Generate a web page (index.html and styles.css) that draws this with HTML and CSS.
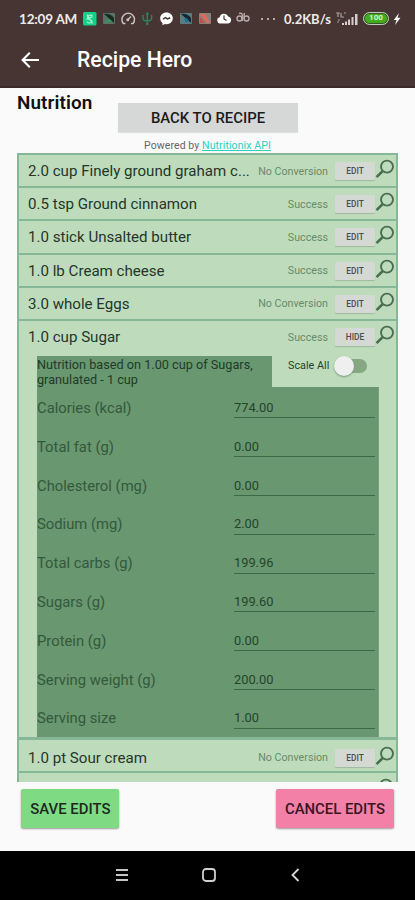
FILE: index.html
```html
<!DOCTYPE html>
<html lang="en">
<head>
<meta charset="utf-8">
<title>Recipe Hero</title>
<link rel="stylesheet" href="styles.css">
</head>
<body>
<svg width="0" height="0" class="defs">
  <symbol id="mag" viewBox="0 0 20 20"><circle cx="12" cy="7.600" r="6" fill="none" stroke="currentColor" stroke-width="1.900"/><path d="M7.800 12 1.500 18.200" stroke="currentColor" stroke-width="2.500" fill="none"/></symbol>
</svg>
<header class="top">
  <div class="status">
    <span class="clock">12:09 AM</span>
    <svg class="tray" width="176" height="16" viewBox="82 11 176 16">
      <rect x="83" y="12" width="13.500" height="13.500" rx="1.500" fill="#14cf86"/>
      <path d="M92.500 16c-2-2-5-.5-5 1.500 0 3 4.500 1.500 4.500 4 0 2-4 2-5 .2M87 14.500l5.500 9M86.500 19.500l6-3" fill="none" stroke="#a9f3d4" stroke-width="1.200"/>
      <rect x="103" y="13" width="12" height="11" rx="1" fill="#5c7065"/><path d="M104 14l10 9v-5q-4-5-10-4z" fill="#172d24"/><path d="M104 23l5-4 3 2z" fill="#2f9c62"/>
      <path d="M123.300 23.500a6.300 6.300 0 1 1 9.800 0M123 23.500h2.500M131 23.500h2.500M127.500 20l3.500-3.500" fill="none" stroke="#c9c0bd" stroke-width="1.500"/><circle cx="127.800" cy="19.800" r="1.500" fill="#c9c0bd"/>
      <path d="M147.300 13v11.500M143 15v3q0 3 4.300 3t4.300-3v-3" fill="none" stroke="#25845a" stroke-width="1.500"/><path d="M145.500 14.500l1.800-2.800 1.800 2.800z" fill="#25845a"/><circle cx="147.300" cy="24" r="1.300" fill="#25845a"/>
      <path d="M166.500 12.500c-3.600 0-6.300 2.500-6.300 5.800 0 2 .9 3.500 2.300 4.600v2.300l2.200-1.200c4.400 1 8.100-1.800 8.100-5.700 0-3.300-2.700-5.800-6.300-5.800z" fill="#fff"/><path d="M163 19.200l2.500-1.500 2 1.300 2.700-1.300" fill="none" stroke="#463533" stroke-width="1.500"/>
      <rect x="180" y="13" width="12" height="11" rx="1" fill="#587e82"/><path d="M181 14l10 9v-5q-4-5-10-4z" fill="#14262f"/><path d="M184 19l3-1 2 3-3 2z" fill="#246f97"/>
      <rect x="199" y="13" width="12" height="11" rx="1" fill="#8a817c"/><path d="M200 14h5l5 9h-3z" fill="#e46859"/><path d="M200 17l5 6h-5z" fill="#bb5147"/>
      <path d="M220 23.500a3.200 3.200 0 0 1-.3-6.300 4.500 4.500 0 0 1 8.500-.8 3.600 3.600 0 0 1-.2 7.100z" fill="#fff"/><path d="M224 15.500v3.500l2.500 1.500" fill="none" stroke="#463533" stroke-width="1.200"/>
      <g fill="none" stroke="#b4aaa7" stroke-width="1.400"><circle cx="239.500" cy="18.500" r="2.500"/><circle cx="246.500" cy="18.500" r="2.500"/><path d="M239 13.500q3-1 3.300 1.500v6M244.200 13v6"/></g>
    </svg>
    <span class="more"><i></i><i></i><i></i></span>
    <span class="speed">0.2KB/s</span>
    <svg class="signal" width="24" height="14" viewBox="0 0 24 14">
      <path d="M1 1h4M3 1v4M6 1v4h3M9 1h2M3 8h2M2 10h2" stroke="#aaa09d" stroke-width="1.200" fill="none"/>
      <path d="M7 13v-2h2v2zM10 13V9.500h2V13zM13 13V7.500h2V13zM16.500 13V5h2v8zM20 13V2h2.500v11z" fill="#d5cecb"/>
    </svg>
    <span class="battery">100</span>
    <svg class="bolt" width="8" height="12" viewBox="0 0 8 12"><path d="M6 0 .8 7H3.500L2 12 7.500 4.800H4.500z" fill="#fff"/></svg>
  </div>
  <div class="bar">
    <svg width="20" height="18" viewBox="0 0 20 18"><path d="M19 9H3M9.800 1.800 2.600 9l7.200 7.200" fill="none" stroke="#fff" stroke-width="2.100"/></svg>
    <h1>Recipe Hero</h1>
  </div>
</header>
<main>
  <div class="head">
    <h2>Nutrition</h2>
    <button class="back"><span>BACK TO RECIPE</span></button>
  </div>
  <p class="powered">Powered by <a>Nutritionix API</a></p>
  <section class="list">
    <div class="row"><span class="name">2.0 cup Finely ground graham c...</span><span class="state">No Conversion</span><button class="edit">EDIT</button><svg class="mag"><use href="#mag"/></svg></div>
    <div class="row"><span class="name">0.5 tsp Ground cinnamon</span><span class="state">Success</span><button class="edit">EDIT</button><svg class="mag"><use href="#mag"/></svg></div>
    <div class="row"><span class="name">1.0 stick Unsalted butter</span><span class="state">Success</span><button class="edit">EDIT</button><svg class="mag"><use href="#mag"/></svg></div>
    <div class="row"><span class="name">1.0 lb Cream cheese</span><span class="state">Success</span><button class="edit">EDIT</button><svg class="mag"><use href="#mag"/></svg></div>
    <div class="row"><span class="name">3.0 whole Eggs</span><span class="state">No Conversion</span><button class="edit">EDIT</button><svg class="mag"><use href="#mag"/></svg></div>
    <div class="row open"><span class="name">1.0 cup Sugar</span><span class="state">Success</span><button class="edit">HIDE</button><svg class="mag"><use href="#mag"/></svg></div>
    <div class="detail">
      <div class="dhead">
        <p class="based">Nutrition based on 1.00 cup of Sugars,<br>granulated - 1 cup</p>
        <div class="scale"><span>Scale All</span><i class="switch"></i></div>
      </div>
      <div class="facts">
        <div class="fact"><label>Calories (kcal)</label><span class="val">774.00</span></div>
        <div class="fact"><label>Total fat (g)</label><span class="val">0.00</span></div>
        <div class="fact"><label>Cholesterol (mg)</label><span class="val">0.00</span></div>
        <div class="fact"><label>Sodium (mg)</label><span class="val">2.00</span></div>
        <div class="fact"><label>Total carbs (g)</label><span class="val">199.96</span></div>
        <div class="fact"><label>Sugars (g)</label><span class="val">199.60</span></div>
        <div class="fact"><label>Protein (g)</label><span class="val">0.00</span></div>
        <div class="fact"><label>Serving weight (g)</label><span class="val">200.00</span></div>
        <div class="fact"><label>Serving size</label><span class="val">1.00</span></div>
      </div>
    </div>
    <div class="row after"><span class="name">1.0 pt Sour cream</span><span class="state">No Conversion</span><button class="edit">EDIT</button><svg class="mag"><use href="#mag"/></svg></div>
    <div class="row last"><svg class="mag"><use href="#mag"/></svg></div>
  </section>
  <div class="actions">
    <button class="save"><span>SAVE EDITS</span></button>
    <button class="cancel"><span>CANCEL EDITS</span></button>
  </div>
</main>
<nav class="nav">
  <svg width="14" height="14" viewBox="0 0 14 14"><path d="M1 2h12M1 7h12M1 12h12" stroke="#c4c4c4" stroke-width="2"/></svg>
  <svg width="14" height="14" viewBox="0 0 14 14"><rect x="1" y="1" width="12" height="12" rx="3" fill="none" stroke="#d0d0d0" stroke-width="1.800"/></svg>
  <svg width="14" height="14" viewBox="0 0 14 14"><path d="M10.500 1 4.500 7l6 6" fill="none" stroke="#d8d8d8" stroke-width="1.800"/></svg>
</nav>
</body>
</html>
```
FILE: styles.css
```css
* { box-sizing: border-box; }
body {
  margin: 0;
  width: 415px;
  height: 900px;
  overflow: hidden;
  display: flex;
  flex-direction: column;
  background: #fafafa;
  font-family: Roboto, "Liberation Sans", sans-serif;
  color: #1b1b1b;
}
.defs { display: none; }
h1, h2, p { margin: 0; }
button { border: 0; padding: 0; font-family: inherit; white-space: nowrap; }

.top { height: 88px; flex: none; background: #463533; border-bottom: 2px solid #392a29; }
.status { height: 37px; display: flex; align-items: center; padding-left: 19px; color: #eee9e7; white-space: nowrap; }
.clock { width: 58px; margin-right: 5px; font: 700 13.5px/16px Lato, Roboto, sans-serif; letter-spacing: -0.2px; }
.tray { flex: none; }
.more { display: flex; gap: 4px; margin-left: 3px; width: 23px; }
.more i { width: 2px; height: 2px; border-radius: 1px; background: #d8d0ce; }
.speed { width: 50px; margin-right: 1px; font: 700 13px/16px Lato, Roboto, sans-serif; }
.signal { flex: none; }
.battery {
  width: 26px; height: 13px; margin-left: 4px; border-radius: 7px;
  border: 1.5px solid #c3c9bc; background: #43ad20;
  box-shadow: inset 0 0 0 1px #38542c;
  color: #d3f5c6; font-size: 8px; line-height: 10.5px; font-weight: 700; text-align: center;
}
.bolt { margin-left: 4px; flex: none; }
.bar { height: 49px; display: flex; align-items: center; padding: 0 0 4px 20px; }
.bar h1 { margin: 1px 0 0 37px; color: #fff; font-size: 21.2px; line-height: 24px; font-weight: 500; }

main { height: 763px; display: flex; flex-direction: column; }
.head { height: 44px; display: flex; align-items: flex-start; }
h2 { width: 101px; margin: 5px 0 0 17px; font-size: 18.9px; line-height: 20px; font-weight: 600; letter-spacing: 0.1px; color: #111; white-space: nowrap; }
.back { width: 180px; height: 29px; margin-top: 15px; padding-top: 1px; border-radius: 1px; background: #d6d7d7; color: #1b1b1b; font-size: 14.9px; font-weight: 500; box-shadow: 0 1px 1px #ddd; }
.powered { height: 21px; padding: 6px 0 0 144px; font-size: 10.5px; line-height: 16px; color: #666; white-space: nowrap; letter-spacing: 0.1px; }
.powered a { color: #2bd1bd; text-decoration: underline; }

.list { width: 381px; height: 629px; flex: none; margin-left: 17px; overflow: hidden; border: solid #86b796; border-width: 2px 2px 0 2px; background: #bedcbb; }
.row { height: 33.2px; display: flex; align-items: center; padding: 1px 0 0 9px; border-bottom: 2px solid #86b796; white-space: nowrap; }
.row.open { height: 35px; padding-bottom: 3px; border-bottom: 0; }
.row.after { height: 36px; padding-top: 5px; border-top: 3px solid #86b796; }
.row.last { border: 0; padding-left: 355px; }
.name { width: 221px; font-size: 15.1px; line-height: 18px; color: #24362b; }
.state { width: 79px; text-align: right; font-size: 10.7px; color: #688a6c; }
.edit { width: 40px; height: 18px; margin-left: 7px; flex: none; border-radius: 1px; background: #d4d9d4; color: #4a4f4b; font-size: 8.3px; font-weight: 500; box-shadow: 0 1px 1px #9fb99f; }
.mag { width: 20px; height: 20px; margin: -4px 0 0 0; flex: none; color: #48704e; }

.detail { width: 342px; margin-left: 18px; }
.dhead { height: 31.5px; display: flex; }
.based { width: 235px; padding-top: 1px; background: #69976f; color: #203c29; font-size: 12.7px; line-height: 15px; white-space: nowrap; }
.scale { flex: 1; display: flex; align-items: center; height: 20px; padding-left: 16px; font-size: 10.8px; color: #283d2d; white-space: nowrap; }
.scale span { width: 46px; }
.switch { position: relative; width: 30px; height: 14px; margin-left: 3px; border-radius: 7px; background: #85a883; }
.switch::before { content: ""; position: absolute; left: -3px; top: -3px; width: 20px; height: 20px; border-radius: 50%; background: #efefef; box-shadow: 0 1px 2px #789778; }
.facts { background: #69976f; border-right: 1px solid #78a27b; }
.fact { height: 38.8px; display: flex; padding-top: 11.5px; }
.fact label { width: 197px; font-size: 14.8px; line-height: 18px; color: #34593d; white-space: nowrap; }
.val { width: 141px; height: 19.5px; border-bottom: 1px solid #3b6a47; font-size: 12.8px; line-height: 17px; color: #24442d; }

.actions { display: flex; justify-content: space-between; padding: 7px 21px 0 21.4px; }
.actions button { height: 39px; padding-top: 1px; border-radius: 2px; font-size: 14.9px; font-weight: 500; color: #1b2a1b; box-shadow: 0 1px 2px #999; }
.save { width: 98px; background: #7fdb83; }
.actions .cancel { width: 118px; background: #f280a7; color: #3a1624; }

.nav { height: 49px; background: #000; display: flex; align-items: center; justify-content: space-between; padding: 0 113px 1px 115px; }
```
